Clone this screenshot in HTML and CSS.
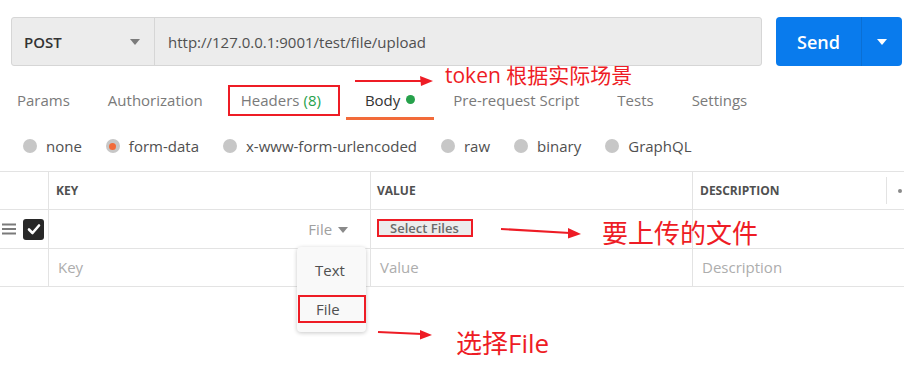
FILE: index.html
```html
<!DOCTYPE html>
<html>
<head>
<meta charset="utf-8">
<link rel="stylesheet" href="styles.css">
</head>
<body>
<div class="page">
  <div class="reqbar">
    <div class="urlbox">
      <div class="method"><span>POST</span><span class="caret"></span></div>
      <div class="url">http://127.0.0.1:9001/test/file/upload</div>
    </div>
    <div class="send"><span class="send-label">Send</span><span class="send-drop"><span class="caret white"></span></span></div>
  </div>

  <div class="tabs">
    <div class="tab">Params</div>
    <div class="tab">Authorization</div>
    <div class="tab boxed">Headers <span class="count">(8)</span></div>
    <div class="tab active">Body <span class="gdot"></span></div>
    <div class="tab">Pre-request Script</div>
    <div class="tab">Tests</div>
    <div class="tab">Settings</div>
  </div>

  <div class="radios">
    <div class="radio"><span class="rc"></span>none</div>
    <div class="radio"><span class="rc on"></span>form-data</div>
    <div class="radio"><span class="rc"></span>x-www-form-urlencoded</div>
    <div class="radio"><span class="rc"></span>raw</div>
    <div class="radio"><span class="rc"></span>binary</div>
    <div class="radio"><span class="rc"></span>GraphQL</div>
  </div>

  <div class="table">
    <div class="row head">
      <div class="c0"></div>
      <div class="c1">KEY</div>
      <div class="c2">VALUE</div>
      <div class="c3"><span>DESCRIPTION</span><span class="hdiv"></span><span class="hdot"></span></div>
    </div>
    <div class="row">
      <div class="c0">
        <svg width="15" height="12" viewBox="0 0 15 12"><rect x="0" y="0.5" width="14" height="2" fill="#7a7a7a"/><rect x="0" y="5" width="14" height="2" fill="#7a7a7a"/><rect x="0" y="9.5" width="14" height="2" fill="#7a7a7a"/></svg>
        <span class="check"><svg width="14" height="12" viewBox="0 0 14 12"><path d="M2 6.5 L5.5 10 L12 2.5" fill="none" stroke="#fff" stroke-width="2.6" stroke-linecap="round" stroke-linejoin="round"/></svg></span>
      </div>
      <div class="c1 keycell"><span class="ftype">File <span class="caret small"></span></span></div>
      <div class="c2"><span class="selfiles">Select Files</span></div>
      <div class="c3"></div>
    </div>
    <div class="row ph">
      <div class="c0"></div>
      <div class="c1">Key</div>
      <div class="c2">Value</div>
      <div class="c3">Description</div>
    </div>
  </div>

  <div class="menu">
    <div class="mi">Text</div>
    <div class="mi sel">File</div>
  </div>

  <div class="note n1">token 根据实际场景</div>
  <div class="note n2">要上传的文件</div>
  <div class="note n3">选择File</div>

  <svg class="arrows" width="904" height="387" viewBox="0 0 904 387">
    <g stroke="#ee1c25" stroke-width="2.2" fill="#ee1c25">
      <line x1="355" y1="81" x2="422" y2="81"/>
      <polygon points="433,81 420,76 421,86" stroke="none"/>
      <line x1="501" y1="229" x2="570" y2="233"/>
      <polygon points="581,234 568,228 568,238.5" stroke="none"/>
      <line x1="378" y1="332" x2="422" y2="334"/>
      <polygon points="432,335 420,330 420,339.5" stroke="none"/>
    </g>
  </svg>
</div>
</body>
</html>
```
FILE: styles.css
```css
* { box-sizing: border-box; }
html, body { margin: 0; padding: 0; background: #fff; }
body { font-family: "Open Sans", "Noto Sans CJK SC", sans-serif; color: #505050; width: 904px; height: 387px; overflow: hidden; }
.page { position: relative; width: 904px; height: 387px; }

.reqbar { display: flex; padding: 17px 2px 0 11px; gap: 14px; height: 66px; }
.urlbox { flex: 0 0 751px; display: flex; height: 49px; background: #ececec; border: 1px solid #d6d6d6; border-radius: 3px; }
.method { width: 143px; border-right: 1px solid #d6d6d6; display: flex; align-items: center; justify-content: space-between; padding: 0 14px 0 12px; font-size: 15px; font-weight: 600; color: #333; }
.url { display: flex; align-items: center; padding-left: 13px; font-size: 15px; color: #505050; }
.caret { width: 0; height: 0; border-left: 5px solid transparent; border-right: 5px solid transparent; border-top: 6px solid #7b7b7b; display: inline-block; }
.caret.white { border-top-color: #fff; }
.caret.small { border-top-color: #8a8a8a; vertical-align: 2px; margin-left: 2px; }
.send { flex: 1; display: flex; height: 49px; background: #097bed; border-radius: 4px; color: #fff; }
.send-label { width: 86px; display: flex; align-items: center; justify-content: center; font-size: 18px; font-weight: 600; border-right: 1px solid #0a6fd4; }
.send-drop { flex: 1; display: flex; align-items: center; justify-content: center; }

.tabs { display: flex; margin-left: -2px; height: 54px; align-items: flex-start; }
.tab { padding: 0 19px; height: 37px; display: flex; align-items: center; font-size: 15px; color: #7a7a7a; position: relative; margin-top: 15px; white-space: nowrap; }
.tab.boxed { outline: 2px solid #ee1c25; outline-offset: -2px; margin-left: 6px; margin-right: 6px; padding: 0 19px 0 13px; margin-top: 19px; height: 31px; padding-bottom: 1px; }
.count { color: #26a14b; margin-left: 4px; }
.tab.active { color: #333; }
.tab.active::after { content: ""; position: absolute; left: 0; right: 0; bottom: -2px; height: 3px; background: #f26b3a; }
.gdot { width: 9px; height: 9px; border-radius: 50%; background: #26a14b; display: inline-block; margin-left: 6px; }

.radios { display: flex; height: 51px; align-items: center; padding-left: 23px; padding-top: 1px; }
.radio { display: flex; align-items: center; font-size: 15px; color: #505050; margin-right: 24px; }
.rc { width: 14px; height: 14px; border-radius: 50%; background: #c7c7c7; margin-right: 9px; position: relative; }
.rc.on::after { content: ""; position: absolute; left: 3.5px; top: 3.5px; width: 7px; height: 7px; border-radius: 50%; background: #f26b3a; }

.table { border-top: 1px solid #e3e3e3; }
.row { display: flex; height: 38px; border-bottom: 1px solid #e3e3e3; }
.row > div { display: flex; align-items: center; }
.c0 { width: 49px; border-right: 1px solid #e3e3e3; padding-left: 2px; gap: 6px; }
.c1 { width: 322px; border-right: 1px solid #e3e3e3; padding-left: 7px; }
.c2 { width: 322px; border-right: 1px solid #e3e3e3; padding-left: 6px; }
.c3 { flex: 1; padding-left: 7px; position: relative; }
.head > div { font-size: 12px; font-weight: 700; color: #505050; }
.hdiv { position: absolute; left: 193px; top: 5px; bottom: 5px; width: 1px; background: #e3e3e3; }
.hdot { position: absolute; left: 205px; top: 17px; width: 4px; height: 4px; border-radius: 50%; background: #8a8a8a; }
.check { width: 21px; height: 21px; border-radius: 3px; background: #282828; display: flex; align-items: center; justify-content: center; }
.keycell { justify-content: flex-end; padding-right: 22px; }
.ftype { font-size: 15px; color: #a0a0a0; margin-top: -1px; }
.selfiles { display: inline-block; background: #ececec; border: 2px solid #ee1c25; font-size: 13px; font-weight: 600; color: #6a6a6a; padding: 0 12px 0 11px; height: 18px; line-height: 14px; margin-top: -2px; }
.row:nth-child(2) { height: 39px; }
.ph > div { font-size: 15px; color: #adadad; padding-left: 9px; padding-bottom: 2px; }
.ph .c0 { padding-left: 2px; }

.menu { position: absolute; left: 297px; top: 247px; width: 69px; height: 85px; background: #f9f9f9; border-radius: 4px; box-shadow: 0 1px 4px rgba(0,0,0,0.22); padding-top: 8px; }
.mi { height: 30px; display: flex; align-items: center; padding-left: 18px; font-size: 15px; color: #505050; }
.mi.sel { margin-top: 10px; height: 28px; border: 2px solid #ee1c25; padding-left: 16px; margin-left: 1px; width: 68px; }

.note { position: absolute; color: #ee1c25; font-family: "Open Sans", "Noto Sans CJK SC", sans-serif; white-space: nowrap; }
.n1 { left: 445px; top: 60px; font-size: 21px; line-height: 30px; }
.n2 { left: 602px; top: 216px; font-size: 26px; line-height: 34px; }
.n3 { left: 456px; top: 326px; font-size: 26px; line-height: 34px; }
.arrows { position: absolute; left: 0; top: 0; pointer-events: none; }
```
